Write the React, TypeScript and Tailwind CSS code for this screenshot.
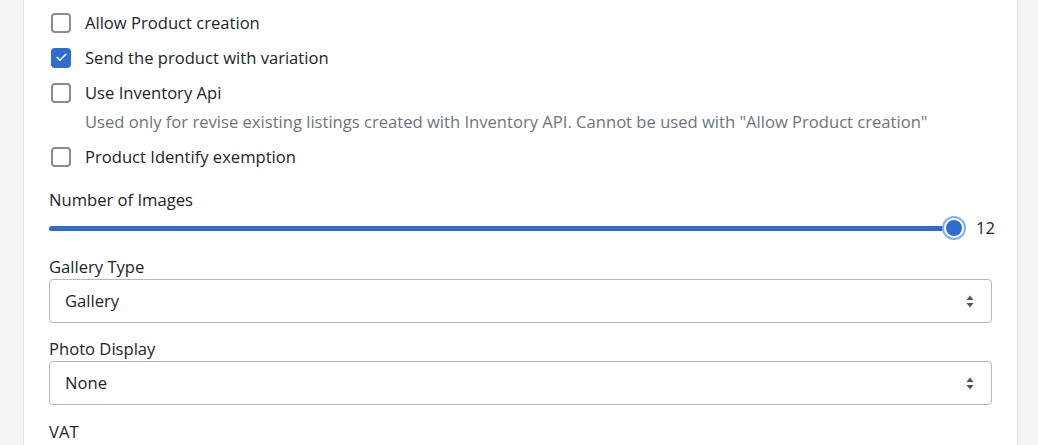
import { Check } from 'lucide-react';

const options = [
  { label: 'Allow Product creation', checked: false },
  { label: 'Send the product with variation', checked: true },
  {
    label: 'Use Inventory Api',
    checked: false,
    help: 'Used only for revise existing listings created with Inventory API. Cannot be used with "Allow Product creation"',
  },
  { label: 'Product Identify exemption', checked: false },
];

function Checkbox({ checked }: { checked: boolean }) {
  if (checked) {
    return (
      <div className="ml-[2px] w-[20px] h-[20px] rounded-[4px] bg-[#2e6dcf] flex items-center justify-center shrink-0">
        <Check size={13} strokeWidth={3} className="text-white" />
      </div>
    );
  }
  return <div className="ml-[2px] w-[20px] h-[20px] rounded-[4px] border-2 border-[#8c8c8c] bg-white shrink-0" />;
}

function SelectBox({ value }: { value: string }) {
  return (
    <div className="h-[44px] rounded-[4px] border border-[#b9b9b9] flex items-center justify-between pl-[15px] pr-[17px]">
      <span>{value}</span>
      <svg width="8" height="13" viewBox="0 0 8 13" className="text-[#555]">
        <path d="M4 0.5 L7.5 5 L0.5 5 Z" fill="currentColor" />
        <path d="M4 12.5 L7.5 8 L0.5 8 Z" fill="currentColor" />
      </svg>
    </div>
  );
}

export default function App() {
  return (
    <div
      className="flex h-[445px] bg-[#f4f4f4] overflow-hidden text-[16.6px] text-[#212529]"
      style={{ fontFamily: '"Open Sans", sans-serif' }}
    >
      <div className="w-[23px] shrink-0" />
      <div className="w-[995px] shrink-0 bg-white border-x border-[#e4e4e4] pl-[25px] pr-[25px] pt-[5px]">
        {options.map((opt) => (
          <div key={opt.label}>
            <div className="h-[35px] flex items-center gap-[14px]">
              <Checkbox checked={opt.checked} />
              <span className="leading-6">{opt.label}</span>
            </div>
            {opt.help && (
              <div className="pl-[36px] h-[24px] leading-6 mb-[5px] text-[#6c757d]">{opt.help}</div>
            )}
          </div>
        ))}

        <div className="mt-[14px] h-[24px] leading-6">Number of Images</div>
        <div className="h-[32px] flex items-center">
          <div className="relative flex-1 h-[5px] rounded-full bg-[#2e6dcf]">
            <div className="absolute right-[-10px] top-1/2 -translate-y-1/2 w-[20px] h-[20px] rounded-full bg-[#2e6dcf] border-2 border-white ring-2 ring-[#7fb0f5]" />
          </div>
          <span className="ml-[22px] w-[16px] whitespace-nowrap">12</span>
        </div>

        <div className="mt-[11px] h-[24px] leading-6">Gallery Type</div>
        <SelectBox value="Gallery" />

        <div className="mt-[14px] h-[24px] leading-6">Photo Display</div>
        <SelectBox value="None" />

        <div className="mt-[15px] h-[24px] leading-6">VAT</div>
      </div>
      <div className="flex-1" />
    </div>
  );
}
